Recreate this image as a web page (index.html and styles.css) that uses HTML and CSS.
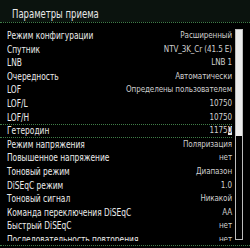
FILE: index.html
```html
<!DOCTYPE html>
<html>
<head>
<meta charset="utf-8">
<link rel="stylesheet" href="styles.css">
</head>
<body>
<div class="screen">
  <div class="title"><span class="title-text">Параметры приема</span></div>
  <div class="sep"></div>
  <div class="body">
    <div class="list">
      <div class="row"><span class="label">Режим конфигурации</span><span class="value">Расширенный</span></div>
      <div class="row"><span class="label">Спутник</span><span class="value">NTV_3K_Cr (41.5 E)</span></div>
      <div class="row"><span class="label">LNB</span><span class="value">LNB 1</span></div>
      <div class="row"><span class="label">Очередность</span><span class="value">Автоматически</span></div>
      <div class="row"><span class="label">LOF</span><span class="value">Определены пользователем</span></div>
      <div class="row"><span class="label">LOF/L</span><span class="value">10750</span></div>
      <div class="row"><span class="label">LOF/H</span><span class="value">10750</span></div>
      <div class="row active"><span class="label">Гетеродин</span><span class="value">1175<span class="cursor">0</span></span></div>
      <div class="row"><span class="label">Режим напряжения</span><span class="value">Поляризация</span></div>
      <div class="row"><span class="label">Повышенное напряжение</span><span class="value">нет</span></div>
      <div class="row"><span class="label">Тоновый режим</span><span class="value">Диапазон</span></div>
      <div class="row"><span class="label">DiSEqC режим</span><span class="value">1.0</span></div>
      <div class="row"><span class="label">Тоновый сигнал</span><span class="value">Никакой</span></div>
      <div class="row"><span class="label">Команда переключения DiSEqC</span><span class="value">AA</span></div>
      <div class="row"><span class="label">Быстрый DiSEqC</span><span class="value">нет</span></div>
      <div class="row"><span class="label">Последовательность повторения</span><span class="value">нет</span></div>
    </div>
    <div class="scroll"><div class="thumb"></div></div>
  </div>
  <div class="sep bottom"></div>
</div>
</body>
</html>
```

FILE: styles.css
```css
html, body {
  margin: 0;
  padding: 0;
  background: #000;
}
.screen {
  width: 250px;
  height: 248px;
  overflow: hidden;
  background: #000;
  font-family: "DejaVu Sans Condensed", "DejaVu Sans", sans-serif;
  font-stretch: condensed;
  color: #e6e6e6;
}
.title {
  height: 22px;
  line-height: 26px;
  padding-left: 12px;
  background: #0b130e;
  color: #e8e8e8;
}
.title-text {
  display: inline-block;
  font-size: 11.5px;
  transform: scaleX(0.82);
  transform-origin: left center;
}
.sep {
  height: 0;
  border-top: 1px dotted #3f7d48;
}
.body {
  display: flex;
  height: 218px;
  padding-top: 6px;
  box-sizing: border-box;
  overflow: hidden;
}
.list {
  flex: 1;
  padding-left: 7px;
  padding-right: 3px;
  overflow: hidden;
}
.row {
  height: 13.6px;
  line-height: 13.6px;
  display: flex;
  justify-content: space-between;
  align-items: center;
  white-space: nowrap;
  box-sizing: border-box;
}
.row.active {
  margin-left: -7px;
  padding-left: 7px;
  border-top: 1px dotted #3f7d48;
  border-bottom: 1px dotted #3f7d48;
}
.label {
  display: inline-block;
  font-size: 10.5px;
  color: #ececec;
  transform: scaleX(0.79);
  transform-origin: left center;
}
.value {
  font-size: 8px;
  color: #cfcfcf;
  letter-spacing: -0.1px;
}
.cursor {
  background: #e8e8e8;
  color: #222;
}
.scroll {
  width: 8px;
  margin-right: 7px;
  height: 211px;
  border: 1px solid #bdbdbd;
  box-sizing: border-box;
  flex: none;
}
.thumb {
  height: 106px;
  background: #ececec;
}
.bottom {
  margin-top: 4px;
}
```
